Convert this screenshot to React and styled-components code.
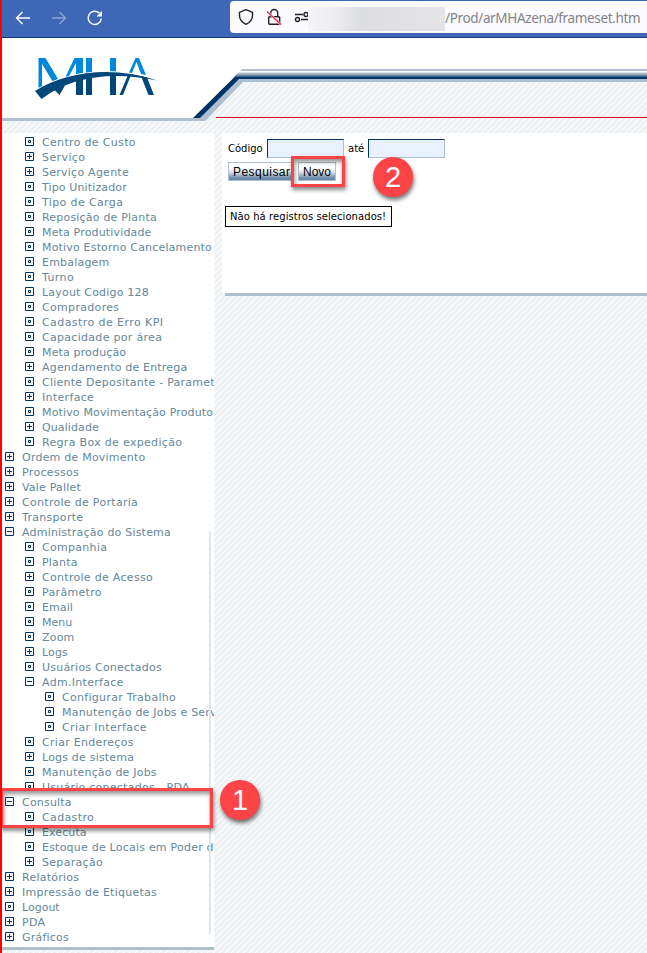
import React from "react";
import styled, { createGlobalStyle } from "styled-components";

const Global = createGlobalStyle`
  *{box-sizing:border-box}
  body{margin:0;background:#fff;overflow:hidden;font-family:Verdana,"DejaVu Sans",sans-serif}
`;
const Page = styled.div`
  position:relative;width:647px;height:953px;border-left:2px solid #f00;overflow:hidden;
  display:flex;flex-direction:column;
`;
const Browser = styled.div`
  height:38px;flex:none;display:flex;background:#3e67b7;border-bottom:1px solid #15387c;
`;
const NavIcons = styled.svg`width:228px;height:37px;flex:none;`;
const Address = styled.div`
  flex:1;height:32px;margin-top:1px;background:#fbfbfe;border-radius:4px 0 0 4px;display:flex;
`;
const AddressIcons = styled.svg`width:78px;height:32px;flex:none;`;
const Blurred = styled.div`
  width:137px;height:24px;margin-top:6px;flex:none;
  background:linear-gradient(90deg,#f5f5f7 0,#ececef 22%,#dcdde0 38%,#dfdfe2 55%,#e2e2e5 75%,#e4e4e6 100%);
`;
const Url = styled.span`
  font:13.5px/35px "Noto Sans",sans-serif;color:#838387;white-space:nowrap;letter-spacing:-0.35px;
`;
const Header = styled.svg`display:block;width:645px;height:95px;flex:none;`;
const Body = styled.div`
  flex:1;display:flex;align-items:flex-start;gap:8px;min-height:0;
`;
const Striped = styled.svg`position:absolute;left:0;top:0;width:645px;height:953px;z-index:-1;`;
const Side = styled.nav`
  width:212px;height:817px;background:#fff;border-bottom:3px solid #afbfc9;padding-top:1px;
  overflow:hidden;position:relative;
`;
const Row = styled.div`
  height:15px;display:flex;align-items:center;gap:8px;padding-left:${p => 3 + p.$level * 20}px;
  font-size:11px;line-height:15px;color:#658799;white-space:nowrap;
`;
const Marker = styled.svg`width:9px;height:9px;flex:none;`;
const Label = styled.span`padding-top:2px;letter-spacing:${p => p.$s}px;`;
const Scroll = styled.div`
  position:absolute;left:207px;top:398px;width:2px;height:403px;background:#e4e4e4;
`;
const Panel = styled.main`
  flex:1;height:163px;background:linear-gradient(#fff,#fff) 0 0/100% 160px no-repeat;
  display:flex;flex-direction:column;align-items:flex-start;padding:6px 0 0 3px;
`;
const Fields = styled.div`
  display:flex;align-items:center;height:19px;padding-left:3px;font-size:10px;
`;
const FieldLabel = styled.label`width:${p => p.$w}px;white-space:nowrap;`;
const Input = styled.input`
  width:77px;height:19px;margin:0 ${p => p.$gap}px 0 0;padding:0;border:1px solid #afc0cc;border-top-color:#003366;
  border-left-color:#003366;background:#e9f0ff;border-radius:0;
`;
const Buttons = styled.div`display:flex;gap:4px;padding:4px 0 0 3px;`;
const Button = styled.button`
  width:${p => p.$w}px;height:19px;padding:0 0 0 4px;border:1px solid #afc0cc;white-space:nowrap;text-align:left;
  background:linear-gradient(#fff 0,#fff 35%,#d8e0e8 55%,#7893af 85%,#6484a5 100%);
  font:12px/18px "Liberation Sans",Arial,sans-serif;color:#000;letter-spacing:${p => p.$s}px;
`;
const Notice = styled.div`
  width:167px;height:21px;margin-top:25px;border:1px solid #000;padding-left:4px;
  font-size:10px;line-height:19px;white-space:nowrap;letter-spacing:.07px;
`;
const PanelEdge = styled.div`margin-top:auto;width:100%;height:3px;background:#afbfc9;`;
const Highlight = styled.div`
  position:absolute;left:${p => p.$x}px;top:${p => p.$y}px;width:${p => p.$w}px;height:${p => p.$h}px;
  border:3px solid #fc4346;
  box-shadow:1px 3px 4px rgba(0,0,0,.45),inset 1px 3px 4px rgba(0,0,0,.42);
`;
const Step = styled.div`
  position:absolute;left:${p => p.$x}px;top:${p => p.$y}px;width:40px;height:40px;border-radius:50%;
  background:#fc4346;color:#fff;box-shadow:1px 3px 4px rgba(0,0,0,.55);
  font:29px/41px "Liberation Sans",Arial,sans-serif;text-align:center;
`;

// level, marker, text, letter spacing
const items = [
  [1, "dot", "Centro de Custo", .33], [1, "plus", "Serviço", .4], [1, "plus", "Serviço Agente", .25],
  [1, "dot", "Tipo Unitizador", .13], [1, "dot", "Tipo de Carga", .38], [1, "dot", "Reposição de Planta", .2],
  [1, "dot", "Meta Produtividade", .16], [1, "dot", "Motivo Estorno Cancelamento", .18], [1, "dot", "Embalagem", .2],
  [1, "dot", "Turno", .4], [1, "dot", "Layout Codigo 128", .2], [1, "dot", "Compradores", .32],
  [1, "dot", "Cadastro de Erro KPI", .43], [1, "dot", "Capacidade por área", .3], [1, "dot", "Meta produção", .15],
  [1, "plus", "Agendamento de Entrega", .19], [1, "dot", "Cliente Depositante - Paramet", .24],
  [1, "plus", "Interface", .33], [1, "dot", "Motivo Movimentação Produto", .15], [1, "plus", "Qualidade", .1],
  [1, "dot", "Regra Box de expedição", .32], [0, "plus", "Ordem de Movimento", .22], [0, "plus", "Processos", .33],
  [0, "plus", "Vale Pallet", .2], [0, "plus", "Controle de Portaria", .3], [0, "plus", "Transporte", .3],
  [0, "minus", "Administração do Sistema", .21], [1, "dot", "Companhia", .3], [1, "dot", "Planta", .2],
  [1, "plus", "Controle de Acesso", .3], [1, "dot", "Parâmetro", .33], [1, "dot", "Email", .1], [1, "dot", "Menu", 0],
  [1, "dot", "Zoom", .2], [1, "plus", "Logs", .15], [1, "dot", "Usuários Conectados", .22],
  [1, "minus", "Adm.Interface", .3], [2, "dot", "Configurar Trabalho", .3],
  [2, "dot", "Manutenção de Jobs e Serv", .2], [2, "dot", "Criar Interface", .38],
  [1, "dot", "Criar Endereços", .3], [1, "plus", "Logs de sistema", .2], [1, "dot", "Manutenção de Jobs", .2],
  [1, "dot", "Usuário conectados - PDA", .25], [0, "minus", "Consulta", .2], [1, "dot", "Cadastro", .37],
  [1, "dot", "Executa", .1], [1, "dot", "Estoque de Locais em Poder d", .22], [1, "plus", "Separação", .3],
  [0, "plus", "Relatórios", .25], [0, "plus", "Impressão de Etiquetas", .25], [0, "dot", "Logout", 0],
  [0, "plus", "PDA", .3], [0, "plus", "Gráficos", .2],
];

function TreeMarker({ kind }) {
  return (
    <Marker viewBox="0 0 9 9" fill="none" stroke="#003366">
      <path d="M.5.5h8v8h-8z" />
      {kind === "dot" && <path d="M3.5 3.5h2v2h-2z" />}
      {kind !== "dot" && <path d="M2 4.5h5" />}
      {kind === "plus" && <path d="M4.5 2v5" />}
    </Marker>
  );
}

export default function App() {
  return (
    <Page>
      <Global />
      <Striped>
        <defs>
          <pattern id="stripes" width="6" height="6" patternUnits="userSpaceOnUse">
            <rect width="6" height="6" fill="#eef1f3" />
            <path d="M-1 7L7-1M-1 1L1-1M5 7L7 5" stroke="#fff" strokeWidth="1.1" />
          </pattern>
        </defs>
        <rect width="645" height="953" fill="url(#stripes)" />
      </Striped>
      <Browser>
        <NavIcons viewBox="2 0 228 37" fill="none" stroke="#fff" strokeWidth="1.4">
          <path d="M30 18H17M22.5 12L16.500 18l6 6" />
          <path d="M52 18h13M59.500 12l6 6-6 6" opacity=".4" />
          <path d="M101.300 18.500A6.600 6.600 0 1 1 99.500 13.300" />
          <path d="M102 11v5.500h-5.500z" fill="#fff" stroke="none" />
        </NavIcons>
        <Address>
          <AddressIcons viewBox="230 1 78 32" fill="none" stroke="#202024" strokeWidth="1.4">
            <path d="M246 9.700l6.500 2.600v3.200c0 4-2.500 7-6.500 8.800-4-1.800-6.500-4.800-6.500-8.800v-3.200z" strokeLinejoin="round" />
            <rect x="268.700" y="16.700" width="11" height="7.600" rx="1" />
            <path d="M270.700 16.500v-3.500a3.500 3.500 0 0 1 7 0v3.500" />
            <path d="M267 11.500l14 13" stroke="#fbfbfe" strokeWidth="2.200" />
            <path d="M267 11.500l14 13" stroke="#e22850" />
            <path d="M295 14.500h8M301 19.500h7" />
            <circle cx="306" cy="14.500" r="2" />
            <circle cx="297.500" cy="19.500" r="2" />
          </AddressIcons>
          <Blurred />
          <Url>/Prod/arMHAzena/frameset.htm</Url>
        </Address>
      </Browser>
      <Header viewBox="2 38 645 95">
        <path d="M2 38H647V70H241L196 119H2z" fill="#fff" />
        <path d="M2 118H200L241 77v5L205 121H2z" fill="#afbfd0" />
        <path d="M204 118L242 79H647" fill="none" stroke="#afbfd2" strokeWidth="6" />
        <path d="M242 69H647v2H240z" fill="#afbfd2" />
        <path d="M240 71H647v1H239z" fill="#fff" />
        <path d="M239 72H647v1H238z" fill="#d6dee7" />
        <path d="M238 73H647v1H237z" fill="#b0bfcf" />
        <path d="M237 74H647v1H236z" fill="#8ea3ba" />
        <path d="M236 75H647v1H235z" fill="#6884a2" />
        <path d="M235 76H647v1H234z" fill="#3f648b" />
        <path d="M234.500 77H647v2H239L200 118h-7L235.500 76z" fill="#003366" />
        <path d="M216 117.500H647" stroke="#e1001a" />
        <g fill="#0088dc">
          <path d="M38.500 58h7l12.500 21-5 3-11-18v24l-3.500 1z" />
          <path d="M74.500 58h8.500v15l-7 1.500V63L68.500 77l-3.500 1z" />
          <path d="M86 58h6v16l-6 .8zM110 58h6v14h-6z" />
          <path d="M135.500 58h3.500l7 17-5-1-4.500-12-4.500 11-3-.5z" />
        </g>
        <path d="M35 91C65 72 112 65 157 80.500 112 71 72 76 41.500 99z" fill="#004879" stroke="#fff" strokeWidth="1.800" paintOrder="stroke" />
        <path d="M54 89.500l11-4-5.500 9.500zM76 79l7-2v18h-7zM86 77l6-1v19h-6zM110 74h6v21h-6zM128 75h3l-8 20h-3.500zM141 76l6 1.500L154 95h-5.500z" fill="#004879" />
      </Header>
      <Body>
        <Side>
          {items.map(([level, kind, text, spacing]) => (
            <Row key={text} $level={level}>
              <TreeMarker kind={kind} />
              <Label $s={spacing}>{text}</Label>
            </Row>
          ))}
          <Scroll />
        </Side>
        <Panel>
          <Fields>
            <FieldLabel $w={39}>Código</FieldLabel>
            <Input $gap={4} />
            <FieldLabel $w={20}>até</FieldLabel>
            <Input $gap={0} />
          </Fields>
          <Buttons>
            <Button $w={66} $s={0.45}>Pesquisar</Button>
            <Button $w={38} $s={0}>Novo</Button>
          </Buttons>
          <Notice>Não há registros selecionados!</Notice>
          <PanelEdge />
        </Panel>
      </Body>
      <Highlight $x={-2} $y={788} $w={213} $h={40} />
      <Step $x={218} $y={780}>1</Step>
      <Highlight $x={289} $y={156} $w={54} $h={31} />
      <Step $x={371} $y={157}>2</Step>
    </Page>
  );
}
